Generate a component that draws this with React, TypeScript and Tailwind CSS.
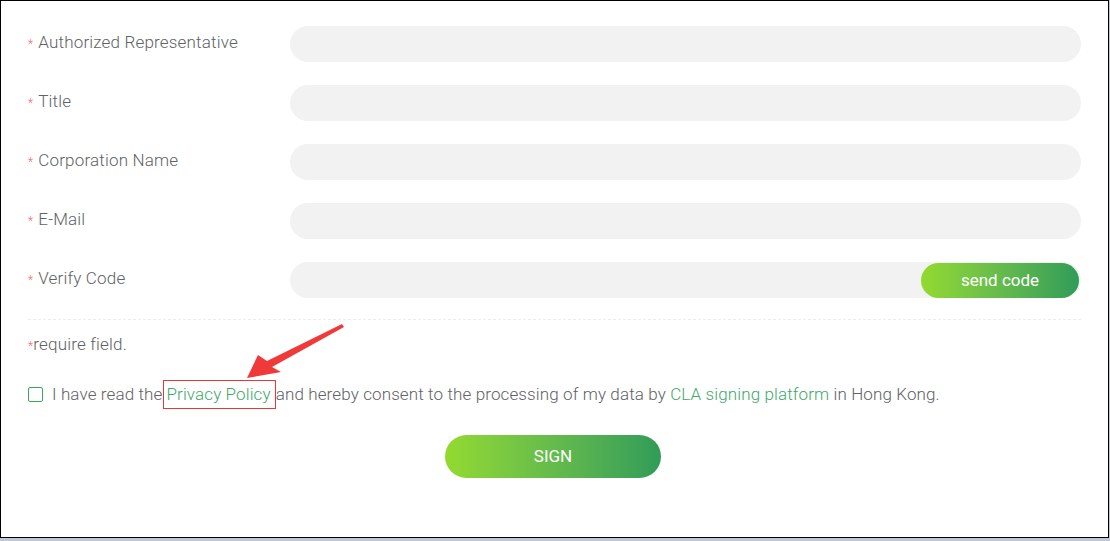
import React from "react";

const fields = ["Authorized Representative", "Title", "Corporation Name", "E-Mail", "Verify Code"];

export default function App() {
  return (
    <div className="w-[1110px] h-[541px] bg-[#bcc7d8] overflow-hidden" style={{ fontFamily: "Roboto, 'Noto Sans', sans-serif" }}>
      <div className="relative w-[1109px] h-[538px] bg-white border border-black text-[#606266] font-light tracking-[0.18px]">
        <div className="flex flex-col gap-[23px] pl-[27px] pr-[27px] pt-[25px]">
          {fields.map((f) => (
            <div key={f} className="flex items-start">
              <label className="w-[262px] flex items-center h-[34px] text-[17px]">
                <span className="text-[#f56c6c] text-[12px] mr-[5px] mt-[2px]">*</span>
                {f}
              </label>
              <div className="relative flex-1 h-[36px] rounded-full bg-[#f2f2f2]">
                {f === "Verify Code" && (
                  <button className="absolute right-[2px] top-[1px] h-[35px] w-[158px] rounded-full text-white text-[17px] font-normal tracking-normal bg-gradient-to-r from-[#93da2e] to-[#2f9c58]">
                    send code
                  </button>
                )}
              </div>
            </div>
          ))}
        </div>
        <div className="mx-[27px] mt-[21px] border-t border-dashed border-[#ececec]" />
        <div className="pl-[27px] mt-[13px] text-[17px] leading-[22px]">
          <span className="text-[#f56c6c] text-[12px]">*</span>require field.
        </div>
        <div className="pl-[27px] mt-[23px] flex items-center text-[17px] tracking-[0.12px]">
          <span className="inline-block w-[15px] h-[15px] border border-[#3ba55c] rounded-[2px] mr-[9px]" />
          <span className="leading-[29px]">
            I have read the
            <span className="inline-block ml-[1px] border border-[#e53935] pl-[2px] pr-[4px] leading-[27px] text-[#3fa86b]">Privacy Policy</span>
            and hereby consent to the processing of my data by <span className="text-[#3fa86b]">CLA signing platform</span> in Hong Kong.
          </span>
        </div>
        <div className="flex justify-center mt-[26px] pr-[3px]">
          <button className="w-[216px] h-[43px] rounded-full text-white text-[17px] font-normal tracking-normal bg-gradient-to-r from-[#93da2e] to-[#2f9c58]">
            SIGN
          </button>
        </div>
        <svg className="absolute left-0 top-0" width="1107" height="536" viewBox="0 0 1107 536">
          <polygon
            points="247,378 258,355 267,361 342,324 344,327 272,367 281,372"
            fill="#f03a3a"
            transform="translate(-1,-1)"
          />
        </svg>
      </div>
    </div>
  );
}
